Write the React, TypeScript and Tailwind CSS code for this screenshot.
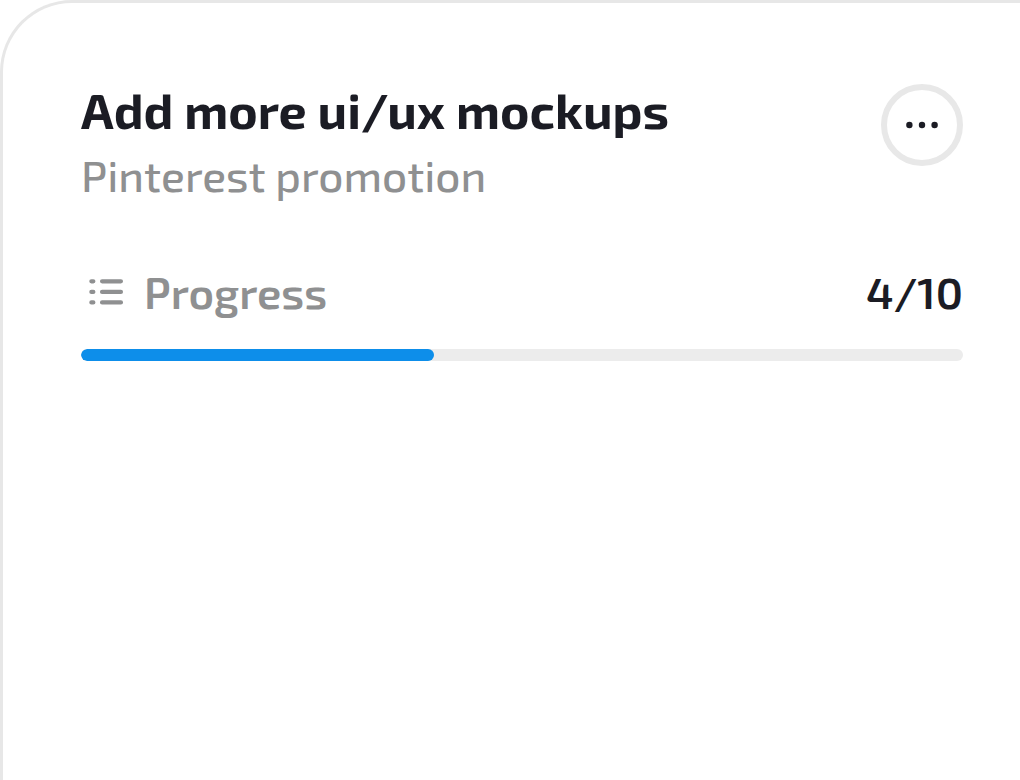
interface Task {
  title: string;
  project: string;
  done: number;
  total: number;
}

const task: Task = {
  title: "Add more ui/ux mockups",
  project: "Pinterest promotion",
  done: 4,
  total: 10,
};

const ListIcon = () => (
  <svg
    className="h-9 w-9 shrink-0"
    viewBox="0 0 36 36"
    fill="none"
    stroke="currentColor"
    strokeWidth="4.3"
    strokeLinecap="round"
    aria-hidden="true"
  >
    <path d="M3.4 7.3h1.9M14.1 7.3h18.8M3.4 17.9h1.9M14.1 17.9h18.8M3.4 28.4h1.9M14.1 28.4h18.8" />
  </svg>
);

const MoreIcon = () => (
  <svg
    className="h-10 w-10"
    viewBox="0 0 40 40"
    fill="currentColor"
    aria-hidden="true"
  >
    <circle cx="7.4" cy="20" r="3.2" />
    <circle cx="20" cy="20" r="3.2" />
    <circle cx="32.6" cy="20" r="3.2" />
  </svg>
);

const TaskCard = ({ title, project, done, total }: Task) => {
  const percent = (done / total) * 100;

  return (
    <article className="min-h-screen rounded-tl-[72px] border-t-[3px] border-l-[3px] border-[#e7e7e7] bg-white pt-[81px] pr-[57px] pl-[78px]">
      <header className="flex items-start justify-between gap-6">
        <div>
          <h1 className="text-[50px] leading-[50px] font-bold">{title}</h1>
          <p className="mt-[13px] text-[44px] leading-[56px] font-medium text-[#8f9091]">
            {project}
          </p>
        </div>
        <button
          type="button"
          aria-label="Task options"
          className="flex h-[82px] w-[82px] shrink-0 items-center justify-center rounded-full border-[6px] border-[#e8e8e8]"
        >
          <MoreIcon />
        </button>
      </header>

      <div className="mt-[61px] flex items-center justify-between text-[44px] leading-[56px] font-semibold">
        <div className="flex items-center gap-5 pl-[7px] text-[#8f9091]">
          <ListIcon />
          <span id="progress-label">Progress</span>
        </div>
        <span>
          {done}/{total}
        </span>
      </div>

      <div
        role="progressbar"
        aria-labelledby="progress-label"
        aria-valuenow={done}
        aria-valuemin={0}
        aria-valuemax={total}
        className="mt-[29px] h-3 overflow-hidden rounded-full bg-[#ececec]"
      >
        <div
          className="h-full rounded-full bg-[#0d8eea]"
          style={{ width: `${percent}%` }}
        />
      </div>
    </article>
  );
};

const App = () => {
  return (
    <main className="min-h-screen bg-white font-['Exo_2','Roboto',sans-serif] text-[#1b1c24] antialiased">
      <TaskCard {...task} />
    </main>
  );
};

export default App;
